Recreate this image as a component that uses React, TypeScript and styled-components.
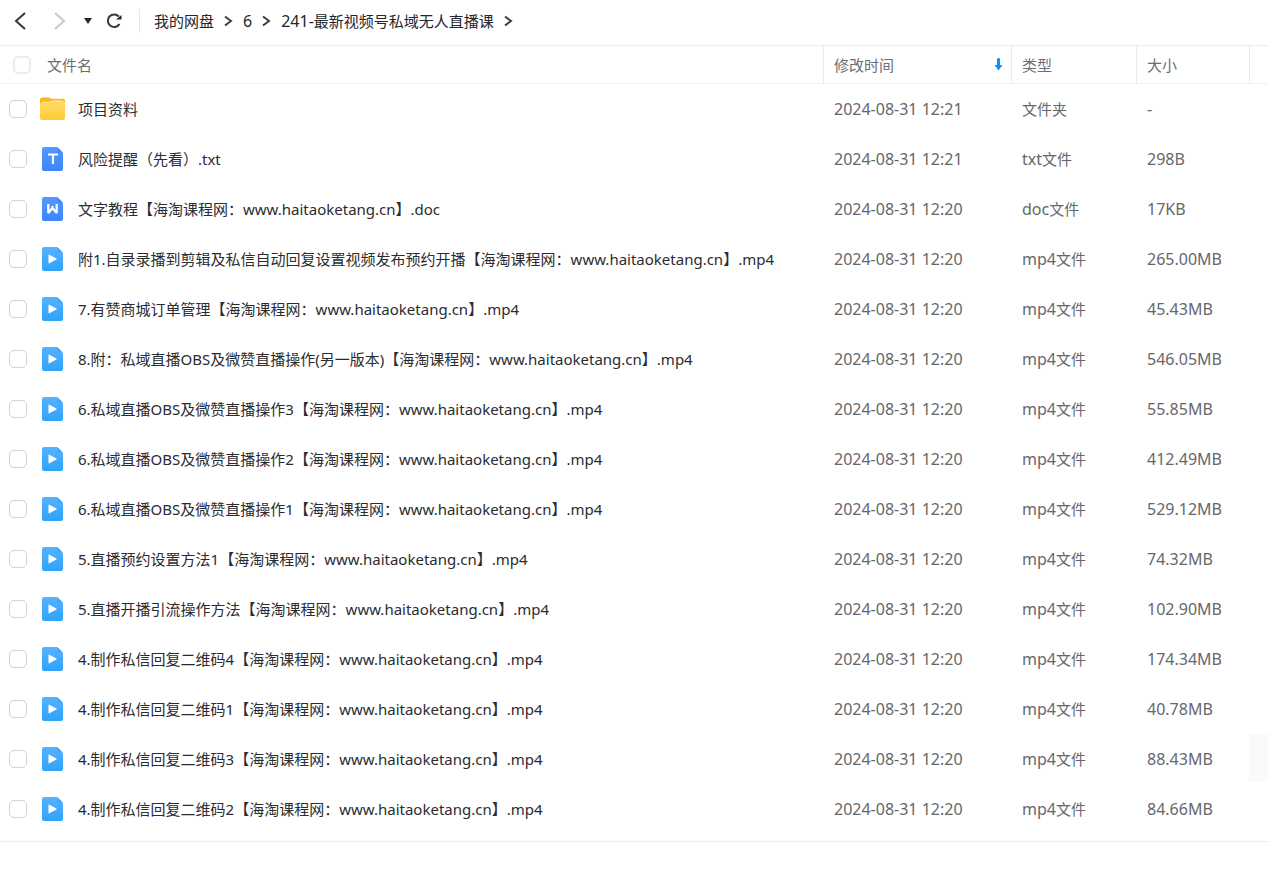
import React from 'react';
import styled, { createGlobalStyle } from 'styled-components';

const GlobalStyle = createGlobalStyle`
  * { box-sizing: border-box; }
  body {
    margin: 0;
    background: #fff;
    color: #333;
    font-family: "Noto Sans", "Noto Sans CJK SC", sans-serif;
    font-size: 15px;
    line-height: 20px;
  }
`;

const Toolbar = styled.header`
  display: flex;
  align-items: center;
  height: 46px;
  padding-bottom: 4px;
  border-bottom: 1px solid #ededf0;
`;

const IconButton = styled.button<{ $width: number }>`
  display: flex;
  align-items: center;
  justify-content: center;
  width: ${p => p.$width}px;
  height: 24px;
  padding: 0;
  border: 0;
  background: none;
  cursor: pointer;
  &:disabled { cursor: default; }
`;

const NavButtons = styled.div`
  display: flex;
  align-items: center;
  height: 24px;
  padding-right: 7px;
  border-right: 1px solid #e6e7ea;
`;

const Breadcrumb = styled.nav`
  display: flex;
  align-items: center;
  gap: 10px;
  padding-left: 14px;
`;

const Crumb = styled.a`
  color: #24262b;
  text-decoration: none;
`;

const Latin = styled.span`
  font-size: 16px;
`;

const FileTable = styled.table`
  width: 100%;
  table-layout: fixed;
  border-collapse: separate;
  border-spacing: 0;
  padding-bottom: 7px;
  border-bottom: 1px solid #ededf0;
`;

const Col = styled.col<{ $width?: number }>`
  width: ${p => (p.$width ? `${p.$width}px` : 'auto')};
`;

const HeadCell = styled.th`
  height: 38px;
  padding: 0 8px 0 10px;
  border-bottom: 1px solid #f0f0f2;
  border-left: 1px solid #ebebee;
  color: #6b6e76;
  font-weight: 400;
  text-align: left;
  &:first-child { padding-left: 13px; border-left: 0; }
`;

const HeadContent = styled.div`
  display: flex;
  align-items: center;
  gap: 16px;
`;

const SortArrow = styled.svg`
  margin-left: auto;
`;

const Cell = styled.td`
  height: 50px;
  padding: 0 11px;
  color: #66676b;
  white-space: nowrap;
  &:first-child { padding-left: 9px; color: #2b2c30; }
`;

const NameLabel = styled.label`
  display: flex;
  align-items: center;
  gap: 13px;
`;

const Checkbox = styled.input<{ $light?: boolean }>`
  appearance: none;
  flex: none;
  width: 18px;
  height: 18px;
  margin: 0;
  border: ${p => (p.$light ? '2px solid #ececee' : '1px solid #cfd3da')};
  border-radius: 5px;
  background: #fff;
  &:checked { background: #2a9bff; }
`;

const SideHandle = styled.button`
  position: fixed;
  right: 0;
  bottom: 94px;
  width: 19px;
  height: 48px;
  padding: 0;
  border: 0;
  background: #fafafc;
`;

type Kind = 'folder' | 'txt' | 'doc' | 'mp4';

const FolderIcon = () => (
  <svg width="25" height="24" viewBox="0 0 25 24" aria-hidden="true">
    <defs>
      <linearGradient id="folder" x1="0" y1="0" x2="0" y2="1">
        <stop offset="0" stopColor="#ffdc66" />
        <stop offset="1" stopColor="#ffca35" />
      </linearGradient>
    </defs>
    <path d="M0 3a2.500 2.500 0 0 1 2.500-2.500h6.500l2.500 1.200h11.500a2 2 0 0 1 2 2v8H0z" fill="#f9b720" />
    <path d="M2 4.800h8l2.500-1.300H23v3H2z" fill="#fff0b8" />
    <path d="M0 7.500a2 2 0 0 1 2-2h7.500l3-1.300H23a2 2 0 0 1 2 2V21a2 2 0 0 1-2 2H2a2 2 0 0 1-2-2z" fill="url(#folder)" />
  </svg>
);

const marks: Record<'txt' | 'doc' | 'mp4', React.ReactNode> = {
  txt: <path d="M6 7.500h10M11 7.500v9.500" fill="none" stroke="#fff" strokeWidth="2.200" />,
  doc: <path d="M6.300 7v9l4.200-5 4.200 5V7M10.500 11V9" fill="none" stroke="#fff" strokeWidth="2.200" strokeLinejoin="bevel" />,
  mp4: <path d="M6.500 8.200v7.600q0 .9.900.500l6.900-3.700q.9-.6 0-1.200L7.400 7.700q-.9-.4-.9.500z" fill="#fff" />,
};

const FileIcon = ({ kind }: { kind: Kind }) => {
  if (kind === 'folder') return <FolderIcon />;
  const [top, bottom, fold] = kind === 'mp4' ? ['#56b2ff', '#2ea3fc', '#2a94f0'] : ['#5598ff', '#3a86fa', '#2a70e6'];
  return (
    <svg width="25" height="24" viewBox="-2 0 25 24" aria-hidden="true">
      <defs>
        <linearGradient id={`file-${kind}`} x1="0" y1="0" x2="0" y2="1">
          <stop offset="0" stopColor={top} />
          <stop offset="1" stopColor={bottom} />
        </linearGradient>
      </defs>
      <path d="M2 0h12.500q1 0 1.700.7l3.900 4q.9.800.9 2V22a2 2 0 0 1-2 2H2a2 2 0 0 1-2-2V2a2 2 0 0 1 2-2z" fill={`url(#file-${kind})`} />
      <path d="M15.500 .500l5 5h-3.500a1.500 1.500 0 0 1-1.500-1.500z" fill={fold} opacity="0.400" />
      {marks[kind]}
    </svg>
  );
};

const Chevron = () => (
  <svg width="9" height="12" viewBox="0 0 9 12" fill="none" stroke="#3a3e48" strokeWidth="2" aria-hidden="true">
    <path d="M1 1.500 7 6 1 10.500" />
  </svg>
);

const MixedText = ({ text }: { text: string }) => (
  <span>
    {text.split(/([\x20-\x7e]+)/).filter(Boolean).map((run, i) =>
      /^[\x20-\x7e]/.test(run) ? <Latin key={i}>{run}</Latin> : run,
    )}
  </span>
);

const typeNames: Record<Kind, string> = { folder: '文件夹', txt: 'txt文件', doc: 'doc文件', mp4: 'mp4文件' };

const files: { name: string; time: string; kind: Kind; size: string }[] = [
  { name: '项目资料', time: '12:21', kind: 'folder', size: '-' },
  { name: '风险提醒（先看）.txt', time: '12:21', kind: 'txt', size: '298B' },
  { name: '文字教程【海淘课程网：www.haitaoketang.cn】.doc', time: '12:20', kind: 'doc', size: '17KB' },
  { name: '附1.自录录播到剪辑及私信自动回复设置视频发布预约开播【海淘课程网：www.haitaoketang.cn】.mp4', time: '12:20', kind: 'mp4', size: '265.00MB' },
  { name: '7.有赞商城订单管理【海淘课程网：www.haitaoketang.cn】.mp4', time: '12:20', kind: 'mp4', size: '45.43MB' },
  { name: '8.附：私域直播OBS及微赞直播操作(另一版本)【海淘课程网：www.haitaoketang.cn】.mp4', time: '12:20', kind: 'mp4', size: '546.05MB' },
  { name: '6.私域直播OBS及微赞直播操作3【海淘课程网：www.haitaoketang.cn】.mp4', time: '12:20', kind: 'mp4', size: '55.85MB' },
  { name: '6.私域直播OBS及微赞直播操作2【海淘课程网：www.haitaoketang.cn】.mp4', time: '12:20', kind: 'mp4', size: '412.49MB' },
  { name: '6.私域直播OBS及微赞直播操作1【海淘课程网：www.haitaoketang.cn】.mp4', time: '12:20', kind: 'mp4', size: '529.12MB' },
  { name: '5.直播预约设置方法1【海淘课程网：www.haitaoketang.cn】.mp4', time: '12:20', kind: 'mp4', size: '74.32MB' },
  { name: '5.直播开播引流操作方法【海淘课程网：www.haitaoketang.cn】.mp4', time: '12:20', kind: 'mp4', size: '102.90MB' },
  { name: '4.制作私信回复二维码4【海淘课程网：www.haitaoketang.cn】.mp4', time: '12:20', kind: 'mp4', size: '174.34MB' },
  { name: '4.制作私信回复二维码1【海淘课程网：www.haitaoketang.cn】.mp4', time: '12:20', kind: 'mp4', size: '40.78MB' },
  { name: '4.制作私信回复二维码3【海淘课程网：www.haitaoketang.cn】.mp4', time: '12:20', kind: 'mp4', size: '88.43MB' },
  { name: '4.制作私信回复二维码2【海淘课程网：www.haitaoketang.cn】.mp4', time: '12:20', kind: 'mp4', size: '84.66MB' },
];

const crumbs = ['我的网盘', '6', '241-最新视频号私域无人直播课'];

export default function App() {
  return (
    <>
      <GlobalStyle />
      <Toolbar>
        <NavButtons>
          <IconButton $width={40} aria-label="后退">
            <svg width="12" height="18" viewBox="0 0 12 18" fill="none" stroke="#343843" strokeWidth="2">
              <path d="M11 1 2 9l9 8" />
            </svg>
          </IconButton>
          <IconButton $width={40} aria-label="前进" disabled>
            <svg width="12" height="18" viewBox="0 0 12 18" fill="none" stroke="#c6c8cc" strokeWidth="2">
              <path d="M1 1l9 8-9 8" />
            </svg>
          </IconButton>
          <IconButton $width={16} aria-label="历史记录">
            <svg width="8" height="6" viewBox="0 0 8 6"><path d="M0 0h8L4 6z" fill="#23262e" /></svg>
          </IconButton>
          <IconButton $width={36} aria-label="刷新">
            <svg width="16" height="16" viewBox="0 0 16 16">
              <path d="M12.800 3.500A6.300 6.300 0 1 0 13.500 11" fill="none" stroke="#343843" strokeWidth="2" />
              <path d="M10 6.500h5.500V2z" fill="#23262e" />
            </svg>
          </IconButton>
        </NavButtons>
        <Breadcrumb aria-label="路径">
          {crumbs.map(c => (
            <React.Fragment key={c}>
              <Crumb href="#"><MixedText text={c} /></Crumb>
              <Chevron />
            </React.Fragment>
          ))}
        </Breadcrumb>
      </Toolbar>
      <FileTable>
        <colgroup>
          <Col />
          <Col $width={188} />
          <Col $width={125} />
          <Col $width={113} />
          <Col $width={19} />
        </colgroup>
        <thead>
          <tr>
            <HeadCell>
              <HeadContent as="label">
                <Checkbox type="checkbox" $light />
                文件名
              </HeadContent>
            </HeadCell>
            <HeadCell>
              <HeadContent>
                修改时间
                <SortArrow width="9" height="13" viewBox="0 0 9 13" aria-hidden="true">
                  <path d="M3 1q0-1 1.500-1T6 1v6h2.500L4.500 12.500.500 7H3z" fill="#0a93ff" />
                </SortArrow>
              </HeadContent>
            </HeadCell>
            <HeadCell>类型</HeadCell>
            <HeadCell>大小</HeadCell>
            <HeadCell aria-hidden="true" />
          </tr>
        </thead>
        <tbody>
          {files.map(f => (
            <tr key={f.name}>
              <Cell>
                <NameLabel>
                  <Checkbox type="checkbox" />
                  <FileIcon kind={f.kind} />
                  <span>{f.name}</span>
                </NameLabel>
              </Cell>
              <Cell><MixedText text={`2024-08-31 ${f.time}`} /></Cell>
              <Cell><MixedText text={typeNames[f.kind]} /></Cell>
              <Cell><MixedText text={f.size} /></Cell>
              <Cell />
            </tr>
          ))}
        </tbody>
      </FileTable>
      <SideHandle aria-label="展开侧栏" />
    </>
  );
}
